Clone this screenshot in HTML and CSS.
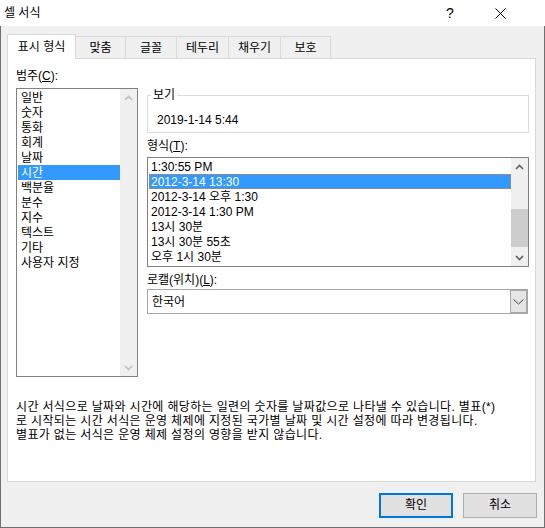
FILE: index.html
```html
<!DOCTYPE html>
<html lang="ko">
<head>
<meta charset="utf-8">
<title>셀 서식</title>
<link rel="stylesheet" href="styles.css">
</head>
<body>
<div class="window">
  <div class="titlebar">
    <span class="title">셀 서식</span>
    <span class="help">?</span>
    <span class="close">
      <svg width="11" height="11" viewBox="0 0 11 11"><path d="M0.5 0.5 L10.5 10.5 M10.5 0.5 L0.5 10.5" stroke="#000" stroke-width="1" fill="none"/></svg>
    </span>
  </div>
  <div class="tabs">
    <div class="tab active">표시 형식</div>
    <div class="tab w50">맞춤</div>
    <div class="tab w51">글꼴</div>
    <div class="tab w52">테두리</div>
    <div class="tab w52">채우기</div>
    <div class="tab w50">보호</div>
  </div>
  <div class="panel">
    <div class="columns">
      <div class="leftcol">
        <div class="label">범주(<u>C</u>):</div>
        <div class="list catlist">
          <div class="items">
            <div class="row">일반</div>
            <div class="row">숫자</div>
            <div class="row">통화</div>
            <div class="row">회계</div>
            <div class="row">날짜</div>
            <div class="row sel">시간</div>
            <div class="row">백분율</div>
            <div class="row">분수</div>
            <div class="row">지수</div>
            <div class="row">텍스트</div>
            <div class="row">기타</div>
            <div class="row">사용자 지정</div>
          </div>
          <div class="vscroll">
            <div class="arrow disabled"><svg width="9" height="6" viewBox="0 0 9 6"><path d="M1 5 L4.5 1.5 L8 5" stroke="currentColor" stroke-width="1.6" fill="none"/></svg></div>
            <div class="track"></div>
            <div class="arrow disabled"><svg width="9" height="6" viewBox="0 0 9 6"><path d="M1 1 L4.5 4.5 L8 1" stroke="currentColor" stroke-width="1.6" fill="none"/></svg></div>
          </div>
        </div>
      </div>
      <div class="rightcol">
        <fieldset class="group">
          <legend>보기</legend>
          <div class="preview">2019-1-14 5:44</div>
        </fieldset>
        <div class="label lbl-format">형식(<u>T</u>):</div>
        <div class="list fmtlist">
          <div class="items">
            <div class="row">1:30:55 PM</div>
            <div class="row sel focus">2012-3-14 13:30</div>
            <div class="row">2012-3-14 오후 1:30</div>
            <div class="row">2012-3-14 1:30 PM</div>
            <div class="row">13시 30분</div>
            <div class="row">13시 30분 55초</div>
            <div class="row">오후 1시 30분</div>
          </div>
          <div class="vscroll">
            <div class="arrow"><svg width="9" height="6" viewBox="0 0 9 6"><path d="M1 5 L4.5 1.5 L8 5" stroke="currentColor" stroke-width="1.6" fill="none"/></svg></div>
            <div class="track"><div class="thumb"></div></div>
            <div class="arrow"><svg width="9" height="6" viewBox="0 0 9 6"><path d="M1 1 L4.5 4.5 L8 1" stroke="currentColor" stroke-width="1.6" fill="none"/></svg></div>
          </div>
        </div>
        <div class="label lbl-locale">로캘(위치)(<u>L</u>):</div>
        <div class="combo">
          <div class="combo-value">한국어</div>
          <div class="combo-btn"><svg width="11" height="6" viewBox="0 0 11 6"><path d="M0.5 0.5 L5.5 5 L10.5 0.5" stroke="#444" stroke-width="1" fill="none"/></svg></div>
        </div>
      </div>
    </div>
    <p class="desc">시간 서식으로 날짜와 시간에 해당하는 일련의 숫자를 날짜값으로 나타낼 수 있습니다. 별표(*)<br>로 시작되는 시간 서식은 운영 체제에 지정된 국가별 날짜 및 시간 설정에 따라 변경됩니다.<br>별표가 없는 서식은 운영 체제 설정의 영향을 받지 않습니다.</p>
  </div>
  <div class="footer">
    <div class="btn default">확인</div>
    <div class="btn">취소</div>
  </div>
</div>
</body>
</html>
```
FILE: styles.css
```css
* { box-sizing: border-box; }
html, body { margin: 0; padding: 0; }
body {
  font-family: "Liberation Sans", "Noto Sans CJK KR", sans-serif;
  font-size: 12px;
  line-height: 15px;
  color: #000;
  background: #f0f0f0;
}
.window {
  width: 545px;
  height: 528px;
  background: #f0f0f0;
  border-left: 1px solid #6f6f6f;
  border-right: 1px solid #6f6f6f;
  border-bottom: 1px solid #6f6f6f;
  display: flex;
  flex-direction: column;
}
.titlebar {
  height: 26px;
  background: #fff;
  display: flex;
  align-items: center;
  margin: 0 -1px;
  padding-left: 4px;
}
.title { flex: 1; font-size: 12px; }
.help { width: 20px; font-size: 14px; margin-right: 35px; text-align: center; }
.close { width: 11px; height: 11px; margin-right: 39px; display: flex; }
.tabs {
  display: flex;
  align-items: flex-end;
  margin-top: 8px;
  padding-left: 6px;
  height: 25px;
  position: relative;
  z-index: 1;
}
.tab {
  height: 22px;
  margin-bottom: 1px;
  padding-top: 1px;
  border-top: 1px solid #d9d9d9;
  border-right: 1px solid #d9d9d9;
  background: #f0f0f0;
  text-align: center;
  line-height: 20px;
}
.tab.active {
  width: 69px;
  height: 25px;
  margin-bottom: 0;
  border-left: 1px solid #d9d9d9;
  background: #fff;
  line-height: 23px;
}
.w50 { width: 50px; }
.w51 { width: 51px; }
.w52 { width: 52px; }
.panel {
  margin: -1px 8px 0 6px;
  height: 424px;
  background: #fff;
  border: 1px solid #d9d9d9;
  padding: 9px 0 0 8px;
}
.columns { display: flex; }
.leftcol { width: 122px; }
.label { height: 15px; padding-top: 1px; white-space: nowrap; }
.list {
  display: flex;
  border: 1px solid #828282;
  background: #fff;
}
.catlist { margin-top: 5px; height: 289px; }
.items { flex: 1; padding-top: 1px; padding-left: 1px; overflow: hidden; }
.row { height: 15px; padding-top: 1px; padding-left: 3px; white-space: nowrap; }
.row.sel { background: #3399ff; color: #fff; }
.row.focus { outline: 1px dotted #d9822b; outline-offset: -1px; }
.vscroll {
  width: 17px;
  background: #f0f0f0;
  display: flex;
  flex-direction: column;
}
.arrow {
  height: 17px;
  display: flex;
  align-items: center;
  justify-content: center;
  color: #606060;
}
.arrow.disabled { color: #bfbfbf; }
.track { flex: 1; }
.thumb { margin-top: 34px; height: 38px; background: #cdcdcd; }
.rightcol { margin-left: 9px; margin-top: 20px; width: 382px; }
.group {
  margin: 0;
  padding: 9px 3px 5px 3px;
  border: 1px solid #dcdcdc;
  min-inline-size: 0;
}
.group legend { padding: 0 2px; line-height: 15px; }
.preview { padding-left: 6px; padding-top: 1px; height: 15px; }
.lbl-format { margin-top: 5px; }
.fmtlist { margin-top: 4px; height: 110px; }
.fmtlist .row { padding-left: 2px; }
.lbl-locale { margin-top: 5px; }
.combo {
  margin-top: 2px;
  height: 25px;
  width: 381px;
  border: 1px solid #a6a6a6;
  display: flex;
  background: #fff;
}
.combo-value { flex: 1; padding-left: 4px; padding-top: 1px; line-height: 22px; }
.combo-btn {
  width: 17px;
  background: #e5e5e5;
  border: 1px solid #a6a6a6;
  margin: 0;
  display: flex;
  align-items: center;
  justify-content: center;
}
.desc {
  margin: 23px 0 0 0;
  line-height: 14px;
  letter-spacing: 0.35px;
  white-space: nowrap;
}
.footer {
  display: flex;
  justify-content: flex-end;
  gap: 10px;
  padding: 11px 7px 0 0;
}
.btn {
  width: 74px;
  height: 25px;
  background: #e1e1e1;
  border: 1px solid #adadad;
  text-align: center;
  line-height: 23px;
}
.btn.default { border: 2px solid #0078d7; line-height: 21px; }
```
